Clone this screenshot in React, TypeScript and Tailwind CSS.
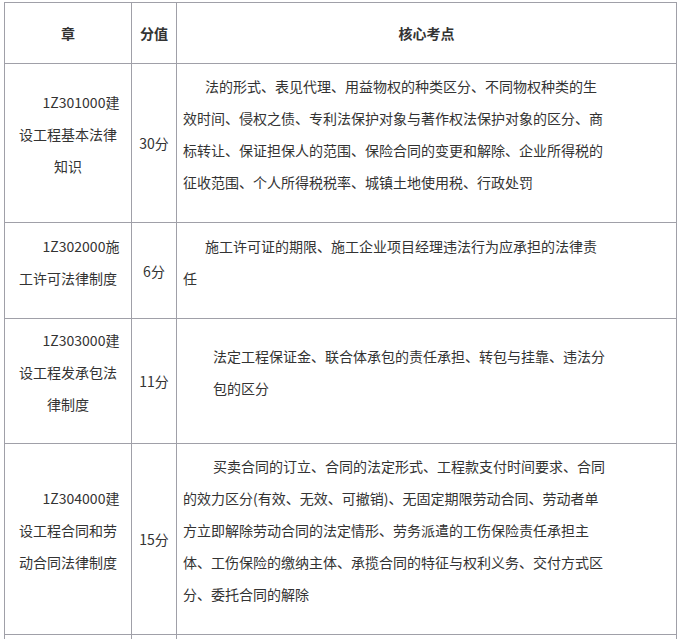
const rows = [
  {
    ch: ["1Z301000建", "设工程基本法律", "知识"],
    score: "30分",
    points: [
      "法的形式、表见代理、用益物权的种类区分、不同物权种类的生",
      "效时间、侵权之债、专利法保护对象与著作权法保护对象的区分、商",
      "标转让、保证担保人的范围、保险合同的变更和解除、企业所得税的",
      "征收范围、个人所得税税率、城镇土地使用税、行政处罚",
    ],
    h: "h-[159px]",
    pad: "pl-[6px]",
  },
  {
    ch: ["1Z302000施", "工许可法律制度"],
    score: "6分",
    points: ["施工许可证的期限、施工企业项目经理违法行为应承担的法律责", "任"],
    h: "h-[96px]",
    pad: "pl-[6px]",
  },
  {
    ch: ["1Z303000建", "设工程发承包法", "律制度"],
    score: "11分",
    points: ["法定工程保证金、联合体承包的责任承担、转包与挂靠、违法分", "包的区分"],
    h: "h-[125px]",
    pad: "pl-[36px] first",
  },
  {
    ch: ["1Z304000建", "设工程合同和劳", "动合同法律制度"],
    score: "15分",
    points: [
      "买卖合同的订立、合同的法定形式、工程款支付时间要求、合同",
      "的效力区分(有效、无效、可撤销)、无固定期限劳动合同、劳动者单",
      "方立即解除劳动合同的法定情形、劳务派遣的工伤保险责任承担主",
      "体、工伤保险的缴纳主体、承揽合同的特征与权利义务、交付方式区",
      "分、委托合同的解除",
    ],
    h: "h-[191px]",
    pad: "pl-[6px]",
  },
];

const firstIndent = ["pl-[22px]", "pl-[22px]", "pl-0", "pl-[30px]"];

export default function App() {
  return (
    <div
      className="h-[639px] w-[679px] overflow-hidden bg-white pl-[4px] pt-[2px] text-[14px] text-[#333]"
      style={{ fontFamily: '"Microsoft YaHei", "Noto Sans CJK SC", sans-serif' }}
    >
      <table className="w-[673px] table-fixed border-collapse">
        <colgroup>
          <col className="w-[127px]" />
          <col className="w-[45px]" />
          <col />
        </colgroup>
        <thead>
          <tr className="h-[61px]">
            <th className="border border-[#a0a0a8] font-bold">章</th>
            <th className="border border-[#a0a0a8] font-bold">分值</th>
            <th className="border border-[#a0a0a8] font-bold">核心考点</th>
          </tr>
        </thead>
        <tbody>
          {rows.map((r, i) => (
            <tr key={r.score} className={r.h}>
              <td className="border border-[#a0a0a8] px-[4px] pb-[18px] text-center leading-[32px] whitespace-nowrap">
                {r.ch.map((l, j) => (
                  <div key={j} className={j === 0 ? "pl-[26px]" : ""}>
                    {l}
                  </div>
                ))}
              </td>
              <td className="border border-[#a0a0a8] px-[4px] text-center leading-[32px]">{r.score}</td>
              <td className={`border border-[#a0a0a8] pb-[18px] leading-[32px] whitespace-nowrap ${r.pad}`}>
                {r.points.map((l, j) => (
                  <div key={j} className={j === 0 ? firstIndent[i] : ""}>
                    {l}
                  </div>
                ))}
              </td>
            </tr>
          ))}
          <tr className="h-[60px]">
            <td className="border border-[#a0a0a8]"></td>
            <td className="border border-[#a0a0a8]"></td>
            <td className="border border-[#a0a0a8]"></td>
          </tr>
        </tbody>
      </table>
    </div>
  );
}
